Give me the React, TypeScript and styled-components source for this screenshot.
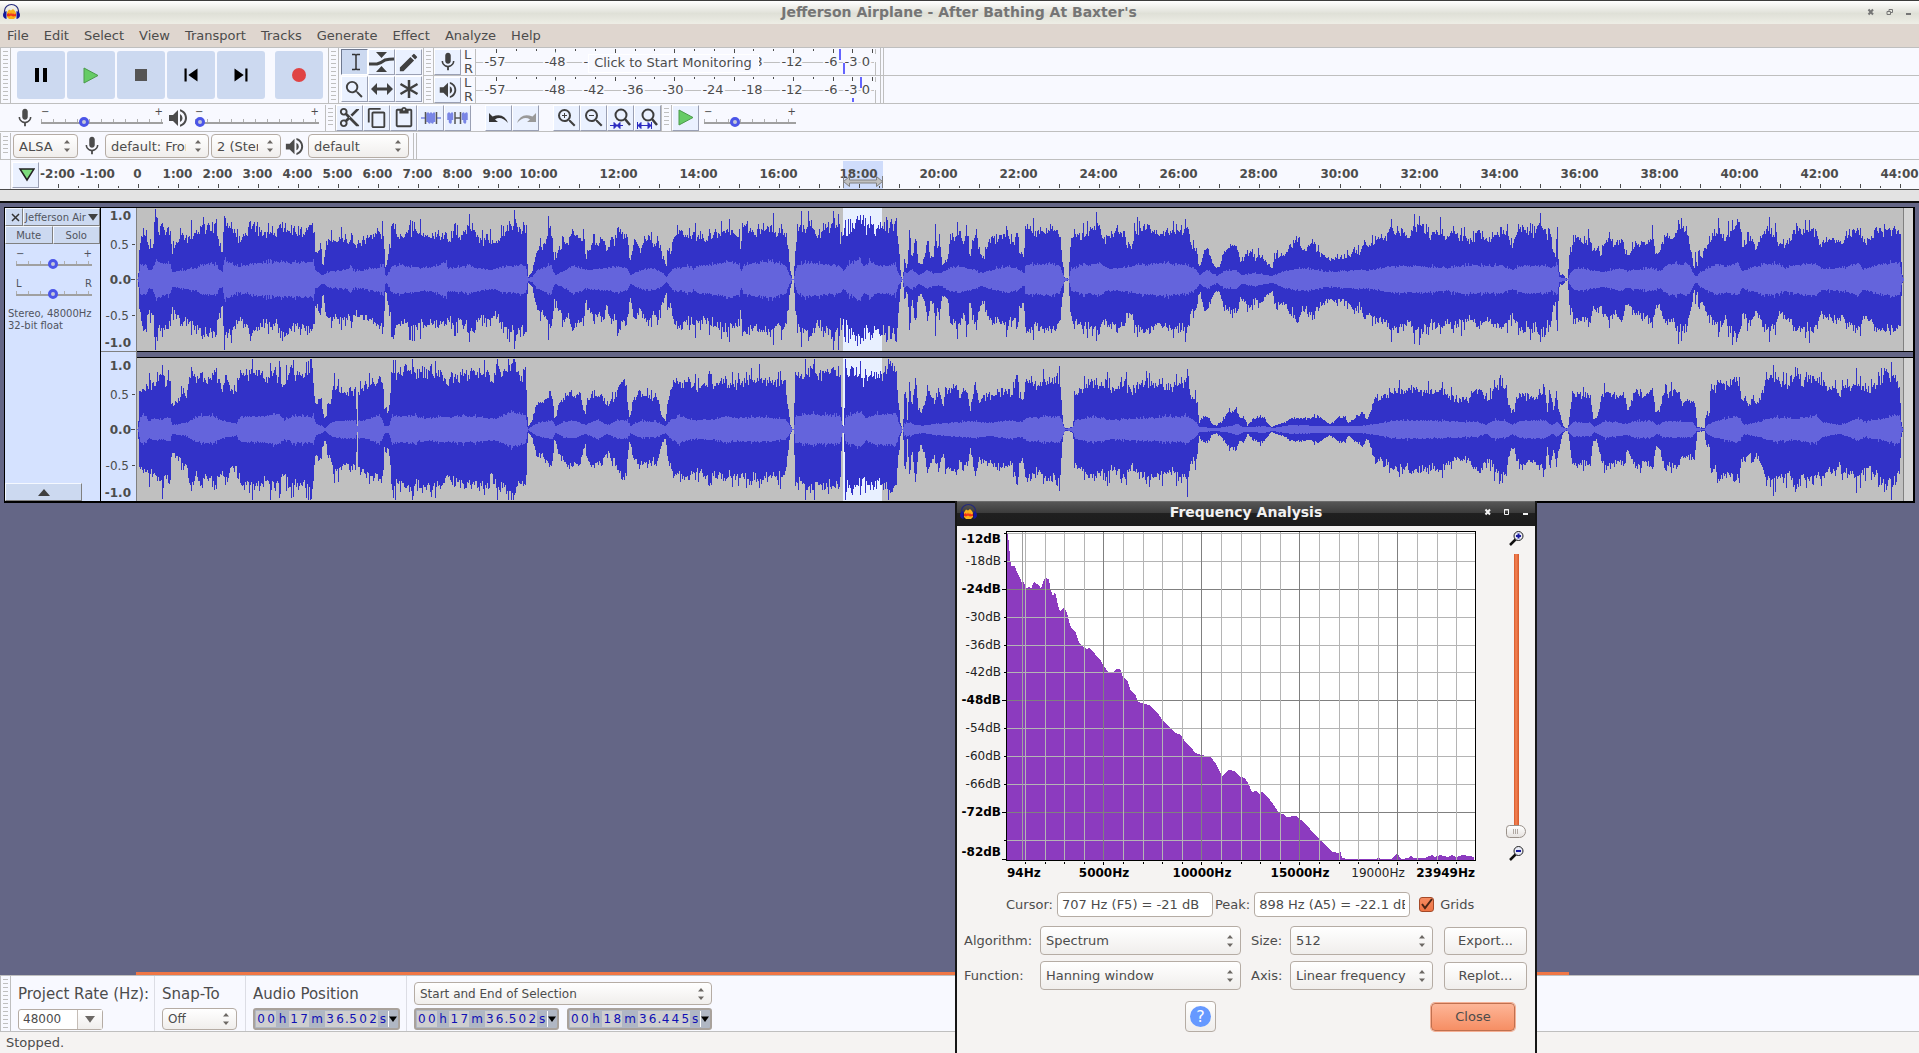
import React, { useState } from 'react';
import styled, { createGlobalStyle } from 'styled-components';
import {
  MdMic, MdVolumeUp, MdContentCut, MdContentCopy, MdContentPaste,
  MdSearch, MdEdit, MdSkipPrevious, MdSkipNext, MdZoomIn, MdZoomOut,
} from 'react-icons/md';

const GlobalStyle = createGlobalStyle`
  * { box-sizing: border-box; }
  body {
    margin: 0;
    font-family: "DejaVu Sans", sans-serif;
    font-size: 13px;
    color: #4c4c4c;
    background: #646686;
  }
  button, input, select { font: inherit; color: inherit; margin: 0; }
  svg { display: block; }
`;

const Window = styled.div`
  height: 100vh;
  display: flex;
  flex-direction: column;
  overflow: hidden;
  position: relative;
`;

const TitleBar = styled.header`
  height: 24px;
  flex: none;
  display: grid;
  grid-template-columns: 1fr auto 1fr;
  align-items: center;
  padding: 0 3px 2px 2px;
  border-top: 1px solid #3c3c3c;
  background: linear-gradient(#ffffff, #dfe0d7 55%, #eeeee6);
  color: #757575;
`;

const Title = styled.h1`
  margin: 0;
  font-size: 14px;
  line-height: 18px;
`;

const WindowButtons = styled.div`
  display: flex;
  justify-content: flex-end;
  gap: 4px;
`;

const WindowButton = styled.button`
  width: 15px;
  height: 15px;
  padding: 0;
  border: 0;
  background: none;
  display: grid;
  place-items: center;
`;

const MenuBar = styled.nav`
  height: 23px;
  flex: none;
  display: flex;
  align-items: center;
  gap: 15px;
  padding-left: 7px;
  background: #dfd6cf;
`;

const MenuLink = styled.a`
  color: inherit;
  text-decoration: none;
  line-height: 20px;
`;

const ToolRow = styled.div<{ $height: number }>`
  height: ${(p) => p.$height}px;
  flex: none;
  display: flex;
  align-items: center;
  border-top: 1px solid #bfbfbf;
  background: #f8f9ff;
`;

const DeviceRow = styled(ToolRow)`
  padding-top: 1px;
`;

const Grip = styled.div`
  width: 11px;
  align-self: stretch;
  flex: none;
  border: solid #bfbfbf;
  border-width: 0 1px;
  padding: 3px 2px;
  background: repeating-linear-gradient(#bfbfbf 0 1px, transparent 1px 4px) content-box;
`;

const BlankGrip = styled.div`
  width: 11px;
  align-self: stretch;
  border-right: 1px solid #d0d0d0;
`;

const Transport = styled.div`
  display: flex;
  gap: 2px;
  align-self: flex-start;
  padding: 3px 5px 0 6px;
`;

const TransportButton = styled.button<{ $apart?: boolean }>`
  width: 48px;
  height: 48px;
  margin-left: ${(p) => (p.$apart ? 8 : 0)}px;
  padding: 0;
  border: 0;
  border-radius: 3px;
  background: #ccd9f0;
  display: grid;
  place-items: center;
`;

const ToolGrid = styled.div`
  display: grid;
  grid-template-columns: repeat(3, 27px);
  row-gap: 1px;
  padding-left: 2px;
  width: 84px;
`;

const ToolButton = styled.button<{ $active?: boolean }>`
  width: 27px;
  height: 26px;
  flex: none;
  padding: 0;
  border: 1px solid;
  border-color: ${(p) => (p.$active ? '#6f7990 #fff #fff #6f7990' : '#fff #9aa0b4 #9aa0b4 #fff')};
  background: ${(p) => (p.$active ? '#ccd9f0' : '#eaf1ff')};
  color: #404040;
  display: grid;
  place-items: center;
`;

const Meters = styled.div`
  flex: 1;
  display: grid;
  grid-template-rows: 27px 28px;
`;

const MeterRow = styled.div`
  display: flex;
  align-items: center;

  & + & { border-top: 1px solid #bfbfbf; }
`;

const Channels = styled.div`
  width: 14px;
  padding-left: 3px;
  line-height: 14px;
`;

const MeterEnd = styled.div`
  align-self: stretch;
  width: 4px;
  margin-left: 4px;
  border: solid #bfbfbf;
  border-width: 0 1px;
`;

const Group = styled.div<{ $left?: number }>`
  display: flex;
  align-items: center;
  margin-left: ${(p) => p.$left || 0}px;
`;

const SliderBox = styled.label<{ $width: number }>`
  width: ${(p) => p.$width}px;
  display: grid;
  grid-template-columns: 1fr auto;
  padding: 0 3px 0 5px;
  font-size: 10px;
  line-height: 8px;
`;

const SliderInput = styled.input`
  grid-column: 1 / -1;
  appearance: none;
  width: 100%;
  height: 12px;
  background:
    linear-gradient(#a0a0a0, #a0a0a0) 0 6px / 100% 2px no-repeat,
    repeating-linear-gradient(90deg, #b0b0b0 0 1px, transparent 1px 12px) 0 3px / 100% 3px no-repeat;

  &::-webkit-slider-thumb {
    appearance: none;
    width: 10px;
    height: 10px;
    border: 3px solid #4b55e8;
    border-radius: 50%;
    background: #c4c8d8;
  }
`;

const SelectBox = styled.div<{ $width?: number; $height?: number; $size?: number }>`
  display: grid;
  width: ${(p) => (p.$width ? p.$width + 'px' : '100%')};
  height: ${(p) => p.$height || 24}px;
  font-size: ${(p) => p.$size || 13}px;
  border: 1px solid #b5aca4;
  border-radius: 4px;
  background: linear-gradient(#fff, #f0eeec);
  align-items: center;

  & > * { grid-area: 1 / 1; }
  & > svg { justify-self: end; margin-right: 6px; pointer-events: none; }
`;

const SelectInput = styled.select`
  appearance: none;
  width: 100%;
  height: 100%;
  padding: 0 22px 0 5px;
  border: 0;
  background: none;
`;

const RulerRow = styled.div`
  height: 31px;
  flex: none;
  display: flex;
  border-top: 1px solid #bfbfbf;
  border-bottom: 1px solid #4c4c4c;
  background: #f8f9ff;
`;

const Ruler = styled.svg`
  flex: 1;
  min-width: 0;
  height: 29px;
`;

const Strip = styled.div`
  height: 13px;
  flex: none;
  background: #e3e3e3;
  border-bottom: 2px solid #101010;
`;

const Workspace = styled.main`
  flex: 1;
  min-height: 0;
  padding: 4px 4px 0;
  background: #646686;
`;

const Track = styled.section`
  display: flex;
  border: solid #000;
  border-width: 1px 2px 2px 1px;
`;

const TrackPanel = styled.div`
  width: 96px;
  flex: none;
  display: flex;
  flex-direction: column;
  border-right: 1px solid #000;
  background: #d5e2ff;
  font-size: 10px;
  color: #50545e;
`;

const PanelRow = styled.div`
  display: flex;
  height: 18px;
`;

const PanelButton = styled.button<{ $width?: number }>`
  ${(p) => (p.$width ? `width: ${p.$width}px` : 'flex: 1')};
  height: 18px;
  padding: 0;
  border: 1px solid;
  border-color: #f4f8ff #808080 #808080 #f4f8ff;
  background: #ccd9f0;
  display: flex;
  align-items: center;
  justify-content: center;
  gap: 2px;
  white-space: nowrap;
`;

const PanelSlider = styled.div`
  padding: 6px 6px 4px;
`;

const TrackInfo = styled.p`
  margin: 4px 0 auto 3px;
  font-size: 10px;
  line-height: 12px;
  white-space: nowrap;
`;

const Scales = styled.div`
  width: 36px;
  flex: none;
  background: #d5e2ff;
  border-right: 1px solid #808080;
`;

const Scale = styled.svg`
  width: 35px;
  height: 144px;
  border-bottom: 1px solid #808080;

  & + & {
    height: 143px;
    margin-top: 6px;
    border: 0;
  }
`;

const Waves = styled.div`
  flex: 1;
  min-width: 0;
  display: grid;
  background: #646686;
`;

const Wave = styled.svg`
  width: 100%;
  height: 143px;
  background: #c0c0c0;

  & + & {
    height: 150px;
    padding-top: 7px;
    background: linear-gradient(#000 1px, #646686 1px 6px, #000 6px 7px, #c0c0c0 7px);
  }
`;

const ScrollTrack = styled.div`
  height: 3px;
  flex: none;
  padding: 0 350px 0 136px;
  background: #646686;
`;

const ScrollThumb = styled.div`
  height: 3px;
  background: #f07746;
`;

const SelectionBar = styled.footer`
  height: 57px;
  flex: none;
  display: flex;
  border-top: 1px solid #bfbfbf;
  border-bottom: 1px solid #bfbfbf;
  background: #f8f9ff;
`;

const Field = styled.div<{ $width: number }>`
  width: ${(p) => p.$width}px;
  display: grid;
  grid-template-rows: 23px 22px;
  row-gap: 3px;
  padding: 6px 8px 0 7px;
  align-items: center;
  border-right: 1px solid #dcdde4;
`;

const SelectionField = styled(Field)`
  grid-template-columns: 145px 145px;
  column-gap: 8px;
  border: 0;

  & > :first-child { grid-column: 1 / -1; }
`;

const FieldLabel = styled.label`
  font-size: 15px;
  line-height: 22px;
  white-space: nowrap;
`;

const RateBox = styled.div`
  display: flex;
  width: 85px;
  height: 21px;
  border: 1px solid #b5aca4;
  border-radius: 3px;
  background: #fff;
  font-size: 12px;
`;

const RateInput = styled.input`
  width: 59px;
  padding: 0 4px;
  border: 0;
  border-right: 1px solid #c5bdb6;
  background: none;
`;

const RateButton = styled.button`
  flex: 1;
  padding: 0;
  border: 0;
  background: linear-gradient(#fff, #f0eeec);
  display: grid;
  place-items: center;
`;

const TimeBox = styled.div`
  height: 22px;
  display: flex;
  align-items: stretch;
  padding: 1px;
  border: 2px solid #a9a29c;
  border-radius: 3px;
  background: #b0b7c4;
  color: #1010b4;
  font-size: 12px;
`;

const Digit = styled.span<{ $unit?: boolean; $width: number }>`
  width: ${(p) => p.$width}px;
  line-height: 16px;
  text-align: center;
  background: ${(p) => (p.$unit ? 'none' : '#cfcfcf')};
`;

const TimeButton = styled.button`
  flex: 1;
  padding: 0;
  border: 0;
  border-left: 1px solid #fff;
  background: #b0b7c4;
  display: grid;
  place-items: center;
`;

const StatusBar = styled.div`
  height: 21px;
  flex: none;
  padding-left: 6px;
  line-height: 22px;
  background: #f5f3f2;
`;

const Dialog = styled.section`
  position: absolute;
  top: 501px;
  right: 382px;
  width: 582px;
  height: 600px;
  border: solid #161616;
  border-width: 0 2px;
  background: #f5f3f2;
`;

const DialogTitle = styled.header`
  height: 25px;
  display: grid;
  grid-template-columns: 1fr auto 1fr;
  align-items: center;
  padding: 0 2px 4px 2px;
  border-top: 1px solid #6b6b6b;
  background: linear-gradient(#565656, #3c3c3c 45%, #202020 46%, #1c1c1c);
  color: #f2f2f2;
`;

const DialogBody = styled.div`
  padding: 0 7px;
`;

const ChartRow = styled.div`
  display: flex;
  justify-content: space-between;
`;

const Chart = styled.svg`
  width: 520px;
  height: 361px;
  overflow: visible;
`;

const ZoomColumn = styled.div`
  width: 24px;
  padding-top: 4px;
  display: flex;
  flex-direction: column;
  align-items: center;
  gap: 7px;
`;

const ZoomSlider = styled.input`
  appearance: none;
  writing-mode: vertical-lr;
  width: 22px;
  height: 284px;
  background: linear-gradient(90deg, #d4582a, #f58355 40%, #d4582a) center top / 5px 276px no-repeat;

  &::-webkit-slider-thumb {
    appearance: none;
    width: 20px;
    height: 13px;
    border: 1px solid #9a918a;
    border-radius: 5px 9px 9px 5px;
    background:
      repeating-linear-gradient(90deg, #b0a8a2 0 1px, transparent 1px 2px) 6px 3px / 5px 5px no-repeat,
      linear-gradient(#fff, #e6e2df);
  }
`;

const ReadoutRow = styled.div`
  display: flex;
  align-items: center;
  margin: 5px 0 9px 42px;
  white-space: nowrap;
`;

const Readout = styled.input`
  width: 156px;
  height: 25px;
  margin: 0 2px 0 4px;
  padding: 0 4px;
  border: 1px solid #b5aca4;
  border-radius: 4px;
  background: #fff;
`;

const GridCheck = styled.label`
  display: flex;
  align-items: center;
  gap: 6px;
  margin-left: 7px;
`;

const CheckBox = styled.span`
  display: grid;
  width: 15px;
  height: 15px;
  border: 1px solid #a54a28;
  border-radius: 3px;
  background: linear-gradient(#f58a60, #ee7343);

  & > * { grid-area: 1 / 1; }
  input { width: 13px; height: 13px; opacity: 0; }
`;

const OptionGrid = styled.div`
  display: grid;
  grid-template-columns: 76px 201px 10px 39px 143px 11px 83px;
  row-gap: 6px;
  align-items: center;
  white-space: nowrap;
`;

const Spacer = styled.span``;

const DialogButton = styled.button<{ $primary?: boolean }>`
  height: 28px;
  width: ${(p) => (p.$primary ? 84 : 83)}px;
  padding: 0;
  border: 1px solid ${(p) => (p.$primary ? '#c0704f' : '#b5aca4')};
  border-radius: 4px;
  background: ${(p) => (p.$primary ? 'linear-gradient(#fdb597, #f68e64)' : 'linear-gradient(#fff, #f0eeec)')};
  box-shadow: ${(p) => (p.$primary ? '0 0 0 1px #f5b095' : 'none')};
`;

const DialogFooter = styled.div`
  display: flex;
  align-items: center;
  justify-content: space-between;
  margin-top: 11px;
  padding: 0 13px 0 221px;
`;

const HelpButton = styled.button`
  width: 31px;
  height: 31px;
  padding: 0;
  border: 1px solid #b5aca4;
  border-radius: 4px;
  background: linear-gradient(#fff, #f0eeec);
  display: grid;
  place-items: center;
`;

const HelpMark = styled.span`
  width: 21px;
  height: 21px;
  border-radius: 50%;
  background: #6699ff;
  color: #fff;
  font-size: 16px;
  line-height: 21px;
`;

// ---- waveform data ----
// Every run is a list of "offset amplitude" pairs, offsets counted in steps
// of 1/scale pixel from the run's start.

interface Run {
  from: number;
  scale: number;
  data: string;
}

const LEFT_PEAK: Run[] = [
  { from: 0, scale: 3, data: '413 0,417 28,425 43,437 45,443 31,450 34,458 31,462 58,468 62,472 58,476 49,485 56,490 49,500 51,510 46,514 28,525 38,535 38,540 48,550 43,570 44,580 49,600 48,607 57,620 50,630 56,640 51,648 56,652 39,658 30,666 28,670 54,680 58,690 50,700 49,710 46,718 38,722 38,728 46,740 46,746 58,760 54,780 50,790 43,800 43,810 48,830 46,840 56,860 54,880 49,890 48,900 51,910 48,920 50,937 56,942 44,944 29,950 24,955 33,962 34,966 15,970 15,974 31,985 38,1010 38,1020 43,1035 36,1048 39,1055 46,1060 39,1070 33,1080 38,1110 43,1130 46,1150 46,1153 23,1156 8,1160 18,1165 26,1170 36,1173 58,1180 59,1186 53,1195 43,1210 43,1240 49,1290 44,1310 43,1338 49,1342 38,1360 44,1380 43,1400 48' },
  { from: 440, scale: 3, data: '0 46,15 48,21 46,22 33,25 44,40 38,55 41,70 49,80 52,100 50,115 43,130 36,138 46,150 39,165 34,180 41,205 48,217 51,222 64,228 54,245 53,256 56,259 39,262 2,270 5,278 8,282 19,292 31,305 34,315 33,323 49,330 53,337 39,342 19,348 24,360 34,370 39,385 39,398 51,403 44,420 41,432 38,437 19,443 33,455 31,460 43,470 34,483 39,490 41,500 26,508 36,515 41,522 36,532 53,538 49,550 39,556 48,562 40,568 18,575 26,580 39,590 38,600 29,610 41,625 44,635 36,645 34,655 38,662 26,670 23,677 12,685 34,690 23,697 39,710 48,725 46,745 41,760 46,780 41,800 43,820 44,840 49,862 53,880 49,898 46,901 23,904 51,920 54,935 48,960 51,995 54,1010 46,1025 49,1038 44,1043 29,1048 13,1055 0,1061 0,1063 30,1070 39,1073 49,1080 54,1100 51,1115 56,1132 43,1150 54,1170 51,1180 59,1195 54,1200 36,1203 49,1208 40,1212 56,1218 46,1230 54,1245 59,1260 64,1270 48,1280 49,1290 58,1305 48,1315 56,1330 51,1345 48,1353 59,1360 53,1367 64,1372 46,1376 23,1382 2,1387 0' },
  { from: 760, scale: 2.613, data: '373 0,375 23,383 11,390 42,397 20,405 42,412 16,420 14,430 23,437 44,445 21,452 23,458 48,463 26,468 42,475 16,490 19,496 43,510 46,520 48,530 36,540 50,547 22,560 48,568 39,575 24,585 24,600 43,615 41,645 46,655 36,664 39,672 54,677 26,688 26,695 51,705 53,720 46,735 51,770 51,785 46,790 23,797 2,808 0,811 26,816 41,830 44,870 50,888 54,905 41,920 46,942 51,955 46,960 31,975 36,983 49,1003 54,1020 50,1040 46,1080 49,1105 51,1122 50,1127 34,1143 29,1147 14,1152 13,1157 24,1170 33,1180 21,1190 13,1200 11,1215 28,1235 34,1248 33,1257 18,1270 23,1283 28,1295 18,1303 24,1315 23,1325 16,1340 11,1345 23,1375 24,1385 34,1395 31,1403 41,1412 39,1420 28,1430 31,1440 38,1452 36,1460 26,1475 23,1490 21,1530 21,1545 26,1560 29' },
  { from: 1360, scale: 2.805, data: '0 26,10 36,40 36,60 41,75 43,90 49,120 48,140 43,150 49,172 55,180 48,200 44,220 49,245 44,265 48,290 44,305 38,325 44,330 54,345 44,360 41,380 44,400 49,415 44,428 34,440 43,455 51,475 49,490 44,500 54,523 51,530 43,537 49,543 29,550 23,555 54,559 16,562 4,570 5,578 1,585 0,588 24,600 34,608 44,620 39,632 36,648 43,655 29,665 31,678 24,685 38,700 39,715 34,735 43,745 29,755 24,770 33,790 39,805 36,822 48,830 29,838 24,845 34,855 43,880 41,890 49,910 51,925 39,933 24,939 6,943 29,947 6,950 23,960 24,970 31,985 38,990 46,1010 49,1025 41,1045 51,1060 56,1068 53,1070 39,1080 31,1090 43,1100 43,1112 31,1125 41,1140 49,1165 48,1175 36,1195 36,1210 44,1225 53,1245 48,1265 51,1283 48,1295 36,1325 39,1345 41,1355 36,1365 46,1385 48,1405 53,1410 33,1430 41,1450 49,1480 51,1516 51,1519 33,1521 9,1524 1,1527 0' },
];

const LEFT_RMS: Run[] = [
  { from: 0, scale: 3, data: '413 0,420 14,440 14,445 8,458 11,465 18,480 17,510 14,515 7,550 9,590 11,600 14,630 16,650 14,655 9,666 8,672 18,690 18,710 13,740 14,760 16,850 17,940 17,945 9,968 3,980 7,1040 9,1052 14,1060 8,1090 9,1120 11,1150 13,1156 2,1175 13,1200 14,1260 11,1310 13,1338 18,1342 11,1400 13' },
  { from: 440, scale: 3, data: '0 14,17 18,22 11,80 14,150 9,200 13,256 14,262 1,275 2,292 9,330 14,345 4,375 9,400 14,435 9,500 11,530 13,560 11,570 4,600 9,640 11,660 8,677 2,700 11,755 13,760 8,770 13,830 15,860 18,898 14,902 7,910 14,990 18,1035 14,1048 4,1055 0,1061 0,1063 6,1072 14,1100 17,1200 13,1210 8,1220 14,1260 21,1270 13,1290 18,1320 13,1365 15,1376 4,1387 0' },
  { from: 760, scale: 2.613, data: '373 0,375 8,383 6,395 9,415 4,437 9,450 6,470 6,496 11,520 13,560 9,575 6,600 9,650 13,670 11,690 6,695 14,760 16,785 13,797 1,808 0,815 11,850 14,890 16,910 11,960 11,980 14,1050 16,1120 14,1143 9,1150 4,1170 9,1195 3,1215 8,1245 9,1260 4,1290 6,1340 3,1370 8,1410 11,1450 10,1475 7,1530 8' },
  { from: 1360, scale: 2.805, data: '0 9,40 9,90 13,180 13,245 11,290 14,400 13,430 9,450 13,520 14,540 11,555 14,560 2,585 0,590 5,605 11,650 9,680 7,735 11,750 8,820 11,840 8,870 15,925 14,940 4,947 3,960 8,1000 15,1030 13,1060 16,1075 8,1100 11,1160 16,1195 11,1220 14,1280 16,1300 10,1360 11,1400 16,1412 10,1450 14,1516 17,1521 3,1527 0' },
];

const RIGHT_PEAK: Run[] = [
  { from: 0, scale: 3, data: '413 0,417 36,425 41,440 43,455 46,470 44,485 56,495 46,505 53,510 49,513 26,525 24,540 33,560 36,566 49,572 59,580 53,590 48,605 56,615 51,630 48,641 58,650 50,660 49,667 41,675 53,683 50,690 39,700 36,710 38,715 48,722 56,750 56,775 58,795 51,817 61,830 54,840 59,845 48,855 48,865 56,885 56,905 54,915 59,925 54,935 61,940 53,943 26,950 26,955 33,962 26,970 11,977 11,981 26,990 28,1000 44,1030 39,1040 34,1050 43,1060 39,1067 40,1069 2,1071 2,1073 36,1080 39,1090 43,1115 49,1125 43,1135 58,1143 48,1150 36,1153 13,1156 26,1160 16,1168 26,1171 39,1174 58,1190 56,1215 59,1243 64,1250 56,1270 59,1290 53,1310 56,1330 51,1340 44,1350 53,1380 53,1400 56' },
  { from: 440, scale: 3, data: '0 49,10 54,22 44,35 54,50 51,75 51,85 56,105 59,125 56,148 58,152 43,157 51,170 61,190 58,205 63,214 70,222 64,235 56,250 56,256 61,259 36,262 2,270 6,277 9,283 18,290 26,305 26,315 31,325 33,331 38,337 29,342 11,347 13,355 26,370 31,380 38,405 33,418 38,425 26,431 18,435 14,440 31,460 36,475 33,485 38,495 26,502 21,510 29,520 29,530 39,538 43,553 48,558 43,563 23,568 11,575 23,580 31,600 36,615 33,635 31,650 34,660 19,668 11,677 8,680 26,690 39,700 46,715 48,745 48,760 44,780 41,800 46,820 43,835 49,860 49,880 44,895 49,920 46,965 51,985 48,1005 46,1035 49,1039 33,1045 16,1050 4,1055 0,1061 0,1063 53,1080 56,1100 58,1117 62,1135 54,1150 58,1199 58,1202 33,1205 4,1211 3,1214 63,1220 53,1237 63,1250 54,1265 56,1268 56,1270 36,1274 59,1290 56,1315 53,1330 58,1362 62,1368 56,1374 26,1380 6,1386 0' },
  { from: 760, scale: 2.613, data: '373 0,375 33,380 43,384 9,390 50,396 19,406 50,412 23,420 16,430 26,437 43,445 33,455 27,465 39,478 23,485 41,495 36,513 46,520 31,530 37,540 39,548 19,563 48,570 29,590 33,620 38,660 36,667 53,672 60,677 34,688 31,695 51,710 48,725 43,745 48,760 48,775 53,786 53,789 29,793 6,797 1,808 1,820 3,823 38,840 38,855 46,880 48,890 43,905 46,925 38,940 44,955 46,975 38,985 44,1003 48,1045 43,1060 46,1080 44,1105 49,1120 53,1126 33,1140 31,1146 26,1148 4,1155 11,1170 13,1180 6,1195 3,1210 8,1222 16,1235 18,1247 21,1255 11,1265 13,1275 4,1290 9,1305 13,1320 11,1337 2,1350 4,1370 6,1387 11,1440 11,1460 13,1475 9,1490 5,1505 9,1515 13,1530 11,1540 6,1550 9,1560 13' },
  { from: 1360, scale: 2.805, data: '0 13,10 18,20 9,28 13,35 23,50 34,60 29,68 36,75 33,90 38,110 41,130 38,150 44,170 39,200 38,235 38,260 33,285 29,310 31,320 41,340 41,355 29,370 34,380 41,410 43,418 28,425 19,435 19,442 33,455 36,475 33,490 29,505 39,523 39,527 16,535 43,543 16,553 36,558 23,564 13,572 3,578 1,585 0,588 9,596 34,610 36,630 33,648 36,655 11,665 11,675 23,683 38,700 36,720 33,745 34,752 18,765 31,775 39,795 33,810 33,823 41,830 19,842 18,850 33,858 43,870 36,895 38,905 26,920 29,940 28,944 16,948 2,968 1,972 16,981 13,986 43,1000 38,1013 51,1025 43,1045 48,1062 49,1072 33,1085 31,1092 23,1105 34,1112 23,1125 33,1140 46,1155 54,1170 49,1185 44,1205 46,1228 56,1245 46,1270 56,1285 48,1305 43,1325 43,1345 36,1358 43,1375 41,1395 49,1410 43,1425 38,1445 43,1460 46,1475 54,1500 54,1512 48,1517 33,1520 8,1524 0' },
];

const RIGHT_RMS: Run[] = [
  { from: 0, scale: 3, data: '413 0,420 13,440 13,442 8,460 10,510 11,515 4,560 6,570 9,600 13,640 13,665 8,710 6,720 12,790 13,840 15,850 9,880 13,940 13,945 6,975 1,990 6,1010 8,1066 9,1070 1,1074 7,1080 8,1140 13,1153 3,1165 3,1175 13,1240 13,1270 11,1400 13' },
  { from: 440, scale: 3, data: '0 13,30 10,100 13,160 10,200 16,215 17,256 14,262 0,290 6,335 9,345 3,370 7,400 9,435 4,470 9,502 4,535 9,560 9,570 3,600 8,650 7,677 3,690 9,715 13,760 9,830 10,855 13,890 11,960 12,1035 10,1048 4,1055 0,1061 0,1064 13,1120 15,1200 13,1206 3,1213 4,1216 13,1240 15,1262 17,1275 11,1300 14,1365 16,1378 4,1387 0' },
  { from: 760, scale: 2.613, data: '373 0,375 6,390 6,420 3,450 5,560 8,600 6,650 9,680 7,700 11,786 13,795 3,800 0,820 2,825 9,870 12,930 9,960 10,1120 13,1143 6,1150 2,1195 1,1230 3,1250 5,1265 2,1320 3,1340 1,1390 4,1470 3,1560 3' },
  { from: 1360, scale: 2.805, data: '0 3,30 4,60 6,110 9,250 8,330 7,355 4,380 9,410 8,430 4,450 8,520 9,540 4,555 7,565 3,580 0,588 3,600 7,650 6,658 2,690 8,750 5,770 8,820 8,835 4,860 8,935 7,946 1,968 0,975 4,990 7,1020 10,1060 13,1080 4,1110 6,1160 12,1200 10,1280 13,1300 7,1350 4,1400 11,1420 7,1450 9,1515 14,1520 3,1526 0' },
];

const WAVE_LEFT = 137;
const WAVE_WIDTH = 1777;

function noise(n: number, seed: number) {
  const v = Math.sin(n * 127.1 + seed * 311.7) * 43758.5453;
  return v - Math.floor(v);
}

function envelope(runs: Run[]): number[] {
  const points = runs.flatMap((run) =>
    run.data.split(',').map((pair) => {
      const [offset, amp] = pair.split(' ').map(Number);
      return [run.from + offset / run.scale - WAVE_LEFT, amp];
    })
  );
  const out: number[] = [];
  let i = 0;
  for (let x = 0; x < 1768; x++) {
    while (i < points.length - 2 && points[i + 1][0] < x) i++;
    const [x0, a0] = points[i];
    const [x1, a1] = points[i + 1];
    const t = Math.min(1, Math.max(0, (x - x0) / (x1 - x0 || 1)));
    out.push(a0 + (a1 - a0) * t);
  }
  return out;
}

function wavePath(runs: Run[], seed: number, spread: number) {
  return envelope(runs)
    .map((amp, x) => {
      // both halves share part of the jitter, the rest is their own
      const shared = noise(x, seed);
      const size = (s: number) => {
        const own = noise(x, s);
        const jitter = (shared + own) / 2 - 0.55;
        const spike = shared > 0.92 ? spread / 2 : 0;
        return Math.round(Math.min(70, amp * (1 + jitter * spread + spike)));
      };
      const up = size(seed + 9);
      const down = size(seed + 5);
      return `M${x} ${71 - up}h1v${up + down + 1}h-1z`;
    })
    .join('');
}

const CHANNELS = [
  { name: 'Left channel', peak: wavePath(LEFT_PEAK, 1, 0.32), rms: wavePath(LEFT_RMS, 2, 0.25) },
  { name: 'Right channel', peak: wavePath(RIGHT_PEAK, 3, 0.32), rms: wavePath(RIGHT_RMS, 4, 0.25) },
];

// ---- spectrum data, thirds of a pixel down, 1/2.613 px across ----
const SPECTRUM = '149 115,152 120,155 150,157 185,160 212,170 213,176 232,182 250,188 264,191 258,196 270,200 283,206 273,212 282,217 268,221 258,226 268,232 270,238 282,243 262,248 250,258 252,262 275,268 302,274 290,278 300,282 330,288 348,296 338,302 345,308 365,314 390,320 402,330 415,338 440,350 459,358 461,364 459,374 467,384 487,394 497,402 512,412 530,426 530,434 522,444 522,452 545,464 562,474 588,484 597,490 620,502 625,520 630,534 645,544 655,554 675,566 690,578 702,590 714,604 720,614 740,630 755,640 775,655 781,682 786,694 806,710 843,726 825,746 828,758 845,770 848,780 870,790 890,800 888,808 897,816 891,832 905,848 935,862 957,874 957,878 965,904 963,916 975,940 1003,962 1028,980 1050,1000 1072,1016 1075,1018 1065,1024 1088,1040 1091,1115 1092,1118 1085,1124 1091,1155 1091,1168 1073,1178 1091,1198 1090,1204 1083,1212 1090,1240 1090,1252 1082,1260 1080,1268 1086,1280 1080,1300 1085,1312 1080,1322 1085,1340 1080,1355 1084,1370 1087';

const spectrumPoints = SPECTRUM.split(',').map((pair) => {
  const [x, y] = pair.split(' ').map(Number);
  return `${Math.round(x / 2.613 - 14)},${Math.round(y / 3 - 31)}`;
});

const DB_LINES = [
  { y: 7, label: '-12dB', bold: true, at: 17 },
  { y: 35, label: '-18dB' },
  { y: 63, label: '-24dB', bold: true },
  { y: 91, label: '-30dB' },
  { y: 119, label: '-36dB' },
  { y: 146, label: '-42dB' },
  { y: 174, label: '-48dB', bold: true },
  { y: 202, label: '-54dB' },
  { y: 230, label: '-60dB' },
  { y: 258, label: '-66dB' },
  { y: 286, label: '-72dB', bold: true },
  { y: 314, label: '-82dB', bold: true, at: 330, light: true },
];

const HZ_LABELS = [
  { x: 43, label: '94Hz', anchor: 'start', bold: true },
  { x: 140, label: '5000Hz', anchor: 'middle', bold: true },
  { x: 238, label: '10000Hz', anchor: 'middle', bold: true },
  { x: 336, label: '15000Hz', anchor: 'middle', bold: true },
  { x: 414, label: '19000Hz', anchor: 'middle', bold: false },
  { x: 511, label: '23949Hz', anchor: 'end', bold: true },
] as const;

const METER_LABELS = [
  [20, '-57'], [80, '-48'], [119, '-42'], [158, '-36'], [198, '-30'], [238, '-24'],
  [277, '-18'], [317, '-12'], [356, '-6'], [376, '-3'], [391, '0'],
] as const;

const MENUS = ['File', 'Edit', 'Select', 'View', 'Transport', 'Tracks', 'Generate', 'Effect', 'Analyze', 'Help'];

// ---- small drawings ----

const Logo = () => (
  <svg width="19" height="18" viewBox="0 0 19 18">
    <path d="M2.500 11V8a7 6.500 0 0 1 14 0v3" fill="none" stroke="#23287c" strokeWidth="1.200" />
    <path d="M5 9.500l2-3 2 1 2-1.500 2 2 1 2v4l-2 2H7l-2-2z" fill="#f9b21a" />
    <path d="M5 11l2-1 1 1.500 1-2 1 2 1-1.500 1 1.500 2-1v2.500l-3 .500-2-1-2 1-2-.500z" fill="#f0321c" />
    <path d="M4.500 8v8Q1 15 1 12t3.500-4zM14.500 8v8q3.500-1 3.500-4t-3.500-4z" fill="#14189c" />
  </svg>
);

const UpDown = () => (
  <svg width="8" height="14" viewBox="0 0 8 14" fill="#6c6864">
    <path d="M1 4.500L4 1l3 3.500zM1 9.500L4 13l3-3.500z" />
  </svg>
);

const Down = ({ size = 8, color = '#4c4c4c' }: { size?: number; color?: string }) => (
  <svg width={size} height={size} viewBox="0 0 8 8" fill={color}>
    <path d="M0 1.500h8L4 7z" />
  </svg>
);

const Buttons = ({ restore }: { restore?: boolean }) => (
  <WindowButtons>
    <WindowButton aria-label="Close window">
      <svg width="8" height="8" viewBox="0 0 8 8" stroke="currentColor" strokeWidth="2">
        <path d="M1.500 1.500l4.500 5M6 1.500l-4.500 5" />
      </svg>
    </WindowButton>
    <WindowButton aria-label="Maximize window">
      <svg width="8" height="8" viewBox="0 0 8 8" stroke="currentColor" fill="none">
        {restore ? <path d="M1 3.500h3.500v3H1zM3 3V1.500h3.500v3H5" /> : <path d="M1.500 1.500h4v5h-4zM1 2h5" />}
      </svg>
    </WindowButton>
    <WindowButton aria-label="Minimize window">
      <svg width="8" height="8" viewBox="0 0 8 8" stroke="currentColor" strokeWidth="2">
        <path d="M1 6h5" />
      </svg>
    </WindowButton>
  </WindowButtons>
);

const ArrowIcon = ({ flip }: { flip?: boolean }) => (
  <svg width="22" height="16" viewBox="0 0 22 16">
    <g transform={flip ? 'translate(22 0) scale(-1 1)' : undefined}>
      <path d="M1 3v9h9L7 9.500q6-4 13 3.500Q16 2 4.500 6.500z" fill={flip ? '#999' : '#333'} />
    </g>
  </svg>
);

const Magnifier = ({ children }: { children: React.ReactNode }) => (
  <svg width="24" height="22" viewBox="0 0 24 22">
    <circle cx="12" cy="8" r="5.500" fill="none" stroke="#3c3c3c" strokeWidth="2" />
    <path d="M16 12l5 6" stroke="#3c3c3c" strokeWidth="2.500" />
    <g stroke="#2a2ac0" fill="#2a2ac0">{children}</g>
  </svg>
);

const WaveIcon = ({ trim }: { trim?: boolean }) => (
  <svg width="22" height="16" viewBox="0 0 22 16" fill="none" strokeWidth="1.500">
    {trim ? (
      <>
        <path d="M1 8h4M17 8h4" stroke="#7a86e6" />
        <path d="M7 12V4q1.500-2 1.500 0v8q1.500 2 1.500 0V4q1.500-2 1.500 0v8q1.500 2 1.500 0V4q1.500-2 1.500 0v8" stroke="#7a86e6" />
        <path d="M5.500 2v12M16.500 2v12" stroke="#555" />
      </>
    ) : (
      <>
        <path d="M1 10V4q1.500-2 1.500 0v8q1.500 2 1.500 0V4q1.500-2 1.500 0v6M15.500 10V4q1.500-2 1.500 0v8q1.500 2 1.500 0V4q1.500-2 1.500 0v6" stroke="#7a86e6" />
        <path d="M8 2v12M13.500 2v12M8 8h5.500" stroke="#555" />
      </>
    )}
  </svg>
);

const DialogZoomIcon = ({ plus }: { plus?: boolean }) => (
  <svg width="17" height="17" viewBox="0 0 17 17">
    <path d="M2 15l6-6" stroke="#111" strokeWidth="2.500" />
    <circle cx="10.500" cy="6" r="4.500" fill="#e6e8f4" stroke="#222" />
    <path d={plus ? 'M8 6h5M10.500 3.500v5' : 'M8 6h5'} stroke="#1c1ca0" strokeWidth="2" />
  </svg>
);

interface SliderProps {
  label: string;
  width: number;
  value: number;
  marks?: [string, string];
}

const Slider: React.FC<SliderProps> = ({ label, width, value, marks = ['−', '+'] }) => {
  const [level, setLevel] = useState(value);
  return (
    <SliderBox $width={width}>
      <span>{marks[0]}</span>
      <span>{marks[1]}</span>
      <SliderInput
        type="range"
        aria-label={label}
        value={level}
        onChange={(e) => setLevel(Number(e.target.value))}
      />
    </SliderBox>
  );
};

interface DropDownProps {
  id: string;
  text: string;
  label?: string;
  width?: number;
  height?: number;
  size?: number;
}

const DropDown: React.FC<DropDownProps> = ({ id, text, label, width, height, size }) => (
  <SelectBox $width={width} $height={height} $size={size}>
    <SelectInput id={id} aria-label={label}>
      <option>{text}</option>
    </SelectInput>
    <UpDown />
  </SelectBox>
);

const CHAR_WIDTHS: Record<string, number> = { h: 13, m: 16, s: 10, '.': 3 };

const TimeField = ({ value, label }: { value: string; label: string }) => (
  <TimeBox role="group" aria-label={label}>
    {value.split('').map((c, i) => (
      <Digit key={i} $unit={/[hms]/.test(c)} $width={CHAR_WIDTHS[c] || 10}>
        {c}
      </Digit>
    ))}
    <TimeButton aria-label={label + ' format'}>
      <Down color="#000" />
    </TimeButton>
  </TimeBox>
);

const Meter = ({ peaks, prompt }: { peaks: number[][]; prompt?: string }) => {
  // the prompt covers the middle of the scale
  const labels = METER_LABELS.filter(([x]) => !prompt || x < 130 || x > 260);
  return (
    <svg width="401" height="26" fontSize="13" fill="#4c4c4c" shapeRendering="crispEdges">
      <path d="M0.500 0v26M1 13.500h398M400.500 0v5M400.500 13v13" stroke="#bfbfbf" />
      {Array.from({ length: 20 }, (_, i) => (
        <path key={i} d={`M${Math.round(21 + i * 19.800)} 0v${i % 3 === 0 || i > 16 ? 4 : 2}`} stroke="#4c4c4c" />
      ))}
      {labels.map(([x, text]) => (
        <text key={text} x={x} y="17" textAnchor="middle" stroke="#f8f9ff" strokeWidth="4" paintOrder="stroke">
          {text}
        </text>
      ))}
      {prompt && (
        <>
          <rect x="113.500" y="5.500" width="170" height="18" fill="#f8f9ff" stroke="#fff" />
          <text x="198" y="18" textAnchor="middle">{prompt}</text>
        </>
      )}
      {peaks.map(([x, y, h]) => (
        <rect key={x} x={x} y={y} width="2" height={h} fill="#6464ff" />
      ))}
    </svg>
  );
};

const TimeRuler = () => {
  const ticks = Array.from({ length: 94 }, (_, i) => i - 5);
  return (
    <Ruler fontSize="12" fontWeight="bold" fill="#4c4c4c">
      <rect x="804" y="1" width="40" height="28" fill="#cfdcfb" />
      {ticks.map((t) => {
        const x = Math.round(99 + t * 20.025) + 0.5;
        const minute = t / 2;
        const named = t % 2 === 0 && minute >= -2 && (minute <= 10 || minute % 2 === 0);
        return (
          <React.Fragment key={t}>
            <path d={`M${x} ${t % 2 === 0 ? 24 : 26}V28`} stroke="#4c4c4c" />
            {named && (
              <text x={x - 1} y="18" textAnchor="middle">
                {minute === 0 ? '0' : `${minute}:00`}
              </text>
            )}
          </React.Fragment>
        );
      })}
      <path
        d="M804.500 16v12M843.500 16v12M804.500 21.500l6-5v3.500h27v-3.500l6 5-6 5v-3.500h-27v3.500z"
        fill="#c0c0c0"
        stroke="#808080"
      />
    </Ruler>
  );
};

const TrackView = () => (
  <Track>
    <TrackPanel>
      <PanelRow>
        <PanelButton $width={18} aria-label="Close track">
          <svg width="13" height="10" stroke="#333" strokeWidth="1.500"><path d="M4 2l7 7M11 2L4 9" /></svg>
        </PanelButton>
        <PanelButton>Jefferson Air <Down size={10} color="#404040" /></PanelButton>
      </PanelRow>
      <PanelRow>
        <PanelButton>Mute</PanelButton>
        <PanelButton>Solo</PanelButton>
      </PanelRow>
      <PanelSlider><Slider label="Gain" width={84} value={48} /></PanelSlider>
      <PanelSlider><Slider label="Pan" width={84} value={48} marks={['L', 'R']} /></PanelSlider>
      <TrackInfo>Stereo, 48000Hz<br />32-bit float</TrackInfo>
      <PanelButton $width={77} aria-label="Collapse track">
        <svg width="12" height="7" fill="#404040"><path d="M0 7h12L6 0z" /></svg>
      </PanelButton>
    </TrackPanel>
    <Scales>
      {CHANNELS.map((c) => (
        <Scale key={c.name} fontSize="12" fill="#4c4c4c" textAnchor="end">
          <text x="30" y="12" fontWeight="bold">1.0</text>
          <text x="28" y="41">0.5</text>
          <text x="30" y="76" fontWeight="bold">0.0</text>
          <text x="28" y="112">-0.5</text>
          <text x="30" y="139" fontWeight="bold">-1.0</text>
          <path d="M31 36.500h3M30 71.500h4M31 107.500h3" stroke="#4c4c4c" />
        </Scale>
      ))}
    </Scales>
    <Waves>
      {CHANNELS.map((c) => (
        <Wave
          key={c.name}
          role="img"
          aria-label={c.name}
          viewBox={`0 0 ${WAVE_WIDTH} 143`}
          preserveAspectRatio="none"
          shapeRendering="crispEdges"
        >
          <rect x="706" width="39" height="143" fill="#e8f0ff" />
          <rect x="1767" width="10" height="143" fill="#d4d4d4" />
          <rect x="1767" width="1" height="143" fill="#808080" />
          <path d={c.peak} fill="#3232c8" />
          <path d={c.rms} fill="#6464dc" />
        </Wave>
      ))}
    </Waves>
  </Track>
);

const SpectrumChart = ({ grids }: { grids: boolean }) => (
  <Chart fontSize="12" fill="#222" shapeRendering="crispEdges">
    <rect x="42" y="5" width="470" height="330" fill="#fff" />
    <polygon points={`43,334 ${spectrumPoints.join(' ')} 510,334`} fill="#8c3bbf" />
    {grids && DB_LINES.map((l) => (
      <path key={l.label} d={`M42 ${l.y + 0.5}h469`} stroke={l.bold && !l.light && l.y > 10 ? '#808080' : '#b4b4b4'} />
    ))}
    {Array.from({ length: 23 }, (_, i) => {
      const x = Math.round(61 + i * 19.600) + 0.5;
      const major = (i + 1) % 5 === 0;
      return (
        <React.Fragment key={i}>
          {grids && <path d={`M${x} 6v328`} stroke={major ? '#808080' : '#b4b4b4'} />}
          <path d={`M${x} 336v${major ? 3 : 2}`} stroke="#000" />
        </React.Fragment>
      );
    })}
    <path d="M58.500 6v328" stroke="#a0a0a0" />
    <rect x="42.500" y="5.500" width="469" height="329" fill="none" stroke="#000" />
    <path d="M38 333.500h4" stroke="#000" />
    {DB_LINES.map((l) => (
      <React.Fragment key={l.label}>
        <text x="37" y={l.at || l.y + 4} textAnchor="end" fontWeight={l.bold ? 'bold' : 'normal'} fill={l.bold ? '#000' : '#222'}>
          {l.label}
        </text>
        <path d={`M${l.bold && !l.at ? 38 : 40} ${l.y + 0.5}H42`} stroke="#000" />
      </React.Fragment>
    ))}
    {HZ_LABELS.map((l) => (
      <text key={l.label} x={l.x} y="351" textAnchor={l.anchor} fontWeight={l.bold ? 'bold' : 'normal'} fill={l.bold ? '#000' : '#222'}>
        {l.label}
      </text>
    ))}
  </Chart>
);

const FrequencyDialog = () => {
  const [grids, setGrids] = useState(true);
  return (
    <Dialog role="dialog" aria-label="Frequency Analysis">
      <DialogTitle>
        <Logo />
        <Title as="h2">Frequency Analysis</Title>
        <Buttons />
      </DialogTitle>
      <DialogBody>
        <ChartRow>
          <SpectrumChart grids={grids} />
          <ZoomColumn>
            <DialogZoomIcon plus />
            <ZoomSlider type="range" aria-label="Zoom" defaultValue="100" />
            <DialogZoomIcon />
          </ZoomColumn>
        </ChartRow>
        <ReadoutRow>
          <label htmlFor="cursor">Cursor:</label>
          <Readout id="cursor" readOnly value="707 Hz (F5) = -21 dB" />
          <label htmlFor="peak">Peak:</label>
          <Readout id="peak" readOnly value="898 Hz (A5) = -22.1 dB" />
          <GridCheck>
            <CheckBox>
              <input type="checkbox" checked={grids} onChange={(e) => setGrids(e.target.checked)} />
              {grids && (
                <svg width="13" height="13" stroke="#4a2414" strokeWidth="2" fill="none">
                  <path d="M2 6l3 4 7-9" />
                </svg>
              )}
            </CheckBox>
            Grids
          </GridCheck>
        </ReadoutRow>
        <OptionGrid>
          <label htmlFor="algorithm">Algorithm:</label>
          <DropDown id="algorithm" text="Spectrum" height={29} />
          <Spacer />
          <label htmlFor="size">Size:</label>
          <DropDown id="size" text="512" height={29} />
          <Spacer />
          <DialogButton>Export...</DialogButton>
          <label htmlFor="function">Function:</label>
          <DropDown id="function" text="Hanning window" height={29} />
          <Spacer />
          <label htmlFor="axis">Axis:</label>
          <DropDown id="axis" text="Linear frequency" height={29} />
          <Spacer />
          <DialogButton>Replot...</DialogButton>
        </OptionGrid>
        <DialogFooter>
          <HelpButton aria-label="Help"><HelpMark>?</HelpMark></HelpButton>
          <DialogButton $primary>Close</DialogButton>
        </DialogFooter>
      </DialogBody>
    </Dialog>
  );
};

const App: React.FC = () => (
  <Window>
    <GlobalStyle />
    <TitleBar>
      <Logo />
      <Title>Jefferson Airplane - After Bathing At Baxter's</Title>
      <Buttons restore />
    </TitleBar>
    <MenuBar>
      {MENUS.map((m) => <MenuLink key={m} href="#">{m}</MenuLink>)}
    </MenuBar>

    <ToolRow $height={56}>
      <Grip />
      <Transport>
        <TransportButton aria-label="Pause">
          <svg width="14" height="14"><path d="M1 0h4v14H1zM9 0h4v14H9z" /></svg>
        </TransportButton>
        <TransportButton aria-label="Play">
          <svg width="16" height="17"><path d="M1 1l14 7.500L1 16z" fill="#66cc66" stroke="#4a9a4a" /></svg>
        </TransportButton>
        <TransportButton aria-label="Stop">
          <svg width="12" height="12"><path d="M0 0h12v12H0z" fill="#555" /></svg>
        </TransportButton>
        <TransportButton aria-label="Skip to start"><MdSkipPrevious size={26} color="#000" /></TransportButton>
        <TransportButton aria-label="Skip to end"><MdSkipNext size={26} color="#000" /></TransportButton>
        <TransportButton $apart aria-label="Record">
          <svg width="14" height="14"><circle cx="7" cy="7" r="7" fill="#e04444" /></svg>
        </TransportButton>
      </Transport>
      <Grip />
      <ToolGrid>
        <ToolButton $active aria-label="Selection tool">
          <svg width="14" height="18" fill="none" stroke="#333" strokeWidth="1.500">
            <path d="M4 1.500h3l1 1 1-1h3M8 2.500v13M4 16.500h3l1-1 1 1h3" />
          </svg>
        </ToolButton>
        <ToolButton aria-label="Envelope tool">
          <svg width="25" height="20" fill="#404040">
            <path d="M7 0h11l-5.500 6zM7 20h11l-5.500-6z" />
            <path d="M0 12h8q4-1 8-4 4-1 9-1" fill="none" stroke="#404040" strokeWidth="3" />
          </svg>
        </ToolButton>
        <ToolButton aria-label="Draw tool"><MdEdit size={23} /></ToolButton>
        <ToolButton aria-label="Zoom tool"><MdSearch size={23} /></ToolButton>
        <ToolButton aria-label="Time shift tool">
          <svg width="22" height="12" fill="#404040"><path d="M0 6l6-6v4.500h10V0l6 6-6 6V7.500H6V12z" /></svg>
        </ToolButton>
        <ToolButton aria-label="Multi tool">
          <svg width="20" height="20" stroke="#404040" strokeWidth="2.500"><path d="M10 1v18M1.500 5l17 10M18.500 5l-17 10" /></svg>
        </ToolButton>
      </ToolGrid>
      <Meters>
        <MeterRow>
          <Grip />
          <ToolButton aria-label="Recording meter"><MdMic size={22} /></ToolButton>
          <Channels>L<br />R</Channels>
          <Meter prompt="Click to Start Monitoring" peaks={[[364, 0, 11], [368, 14, 11]]} />
          <MeterEnd />
        </MeterRow>
        <MeterRow>
          <Grip />
          <ToolButton aria-label="Playback meter"><MdVolumeUp size={22} /></ToolButton>
          <Channels>L<br />R</Channels>
          <Meter peaks={[[385, 0, 11], [377, 21, 4]]} />
          <MeterEnd />
        </MeterRow>
      </Meters>
    </ToolRow>

    <ToolRow $height={28}>
      <Group $left={14}>
        <MdMic size={22} />
        <Slider label="Recording volume" width={130} value={34} />
        <MdVolumeUp size={24} />
        <Slider label="Playback volume" width={132} value={0} />
      </Group>
      <Group $left={3}>
        <Grip />
        <ToolButton aria-label="Cut"><MdContentCut size={23} /></ToolButton>
        <ToolButton aria-label="Copy"><MdContentCopy size={22} /></ToolButton>
        <ToolButton aria-label="Paste"><MdContentPaste size={22} /></ToolButton>
        <ToolButton aria-label="Trim"><WaveIcon trim /></ToolButton>
        <ToolButton aria-label="Silence"><WaveIcon /></ToolButton>
      </Group>
      <Group $left={14}>
        <ToolButton aria-label="Undo"><ArrowIcon /></ToolButton>
        <ToolButton aria-label="Redo"><ArrowIcon flip /></ToolButton>
      </Group>
      <Group $left={14}>
        <ToolButton aria-label="Zoom in"><MdZoomIn size={24} /></ToolButton>
        <ToolButton aria-label="Zoom out"><MdZoomOut size={24} /></ToolButton>
        <ToolButton aria-label="Zoom to selection">
          <Magnifier><path d="M1 18.500h13M5 15.500l3 3-3 3zM11 15.500l-3 3 3 3z" /></Magnifier>
        </ToolButton>
        <ToolButton aria-label="Fit project">
          <Magnifier><path d="M1.500 15v7M15.500 15v7M2 18.500h13M5 15.500l-3 3 3 3zM12 15.500l3 3-3 3z" /></Magnifier>
        </ToolButton>
        <Grip />
        <ToolButton aria-label="Play at speed">
          <svg width="16" height="17"><path d="M1 1l14 7.500L1 16z" fill="#66cc66" stroke="#4a9a4a" /></svg>
        </ToolButton>
        <Slider label="Playback speed" width={100} value={32} />
      </Group>
    </ToolRow>

    <DeviceRow $height={28}>
      <Grip />
      <Group $left={2}>
        <DropDown id="host" label="Audio host" text="ALSA" width={65} />
      </Group>
      <Group $left={3}>
        <MdMic size={22} />
      </Group>
      <Group $left={2}>
        <DropDown id="input" label="Recording device" text="default: Front Mic:0" width={104} />
      </Group>
      <Group $left={2}>
        <DropDown id="inputs" label="Recording channels" text="2 (Stereo) Recording" width={70} />
      </Group>
      <Group $left={2}>
        <MdVolumeUp size={23} />
      </Group>
      <Group $left={2}>
        <DropDown id="output" label="Playback device" text="default" width={101} />
      </Group>
      <MeterEnd />
    </DeviceRow>

    <RulerRow>
      <BlankGrip />
      <Group $left={1}>
        <ToolButton aria-label="Pin play head">
          <svg width="18" height="14"><path d="M3 1h14l-7 11z" fill="#7ddc7d" stroke="#222" strokeWidth="1.500" /></svg>
        </ToolButton>
      </Group>
      <TimeRuler />
    </RulerRow>
    <Strip />

    <Workspace>
      <TrackView />
    </Workspace>

    <ScrollTrack><ScrollThumb /></ScrollTrack>
    <SelectionBar>
      <Grip />
      <Field $width={144}>
        <FieldLabel htmlFor="rate">Project Rate (Hz):</FieldLabel>
        <RateBox>
          <RateInput id="rate" defaultValue="48000" />
          <RateButton aria-label="Choose rate"><Down size={10} color="#6c6864" /></RateButton>
        </RateBox>
      </Field>
      <Field $width={91}>
        <FieldLabel htmlFor="snap">Snap-To</FieldLabel>
        <DropDown id="snap" text="Off" height={22} size={12} />
      </Field>
      <Field $width={161}>
        <FieldLabel as="span">Audio Position</FieldLabel>
        <TimeField label="Audio position" value="00h17m36.502s" />
      </Field>
      <SelectionField $width={320}>
        <DropDown id="range" label="Selection range" text="Start and End of Selection" height={23} size={12} />
        <TimeField label="Selection start" value="00h17m36.502s" />
        <TimeField label="Selection end" value="00h18m36.445s" />
      </SelectionField>
    </SelectionBar>
    <StatusBar>Stopped.</StatusBar>

    <FrequencyDialog />
  </Window>
);

export default App;
